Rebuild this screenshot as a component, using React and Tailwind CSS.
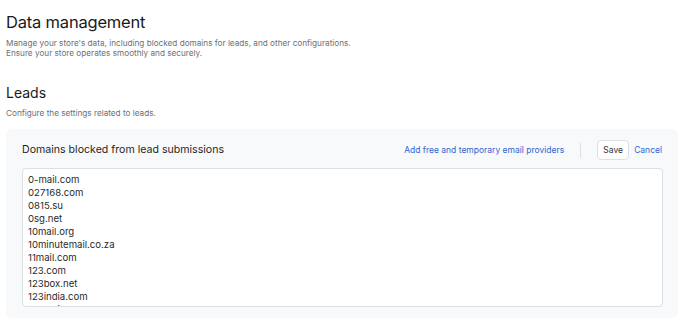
import React from "react";

const domains = [
  "0-mail.com",
  "027168.com",
  "0815.su",
  "0sg.net",
  "10mail.org",
  "10minutemail.co.za",
  "11mail.com",
  "123.com",
  "123box.net",
  "123india.com",
  "123mail.cl",
  "123mail.org",
];

export default function App() {
  return (
    <div className="w-[688px] h-[329px] bg-white overflow-hidden font-['Inter',sans-serif] text-[#1a1a1a]">
      <div className="px-[6px] pt-[11px]">
        <h1 className="text-[16.5px] leading-[22px] font-normal tracking-[-0.2px]">Data management</h1>
        <p className="mt-[5px] text-[8.2px] leading-[10px] text-[#6b6f76]">
          Manage your store's data, including blocked domains for leads, and other configurations.
          <br />
          Ensure your store operates smoothly and securely.
        </p>
        <h2 className="mt-[26px] text-[14px] leading-[18px] font-normal">Leads</h2>
        <p className="mt-[6px] text-[8.2px] leading-[10px] text-[#6b6f76]">Configure the settings related to leads.</p>
        <div className="mt-[11px] w-[672px] h-[189px] rounded-[6px] bg-[#f8f9fa] px-[16px] pt-[11px]">
          <div className="flex items-center h-[20px]">
            <div className="text-[10.6px] leading-[14px] text-[#1f1f1f]">Domains blocked from lead submissions</div>
            <div className="ml-auto flex items-center">
              <button className="text-[8.5px] text-[#2f66d0]">Add free and temporary email providers</button>
              <div className="ml-[16px] w-px h-[15px] bg-[#dcdfe3]" />
              <button className="ml-[16px] h-[20px] w-[32px] rounded-[4px] border border-[#dcdfe3] bg-white text-[8.5px] text-[#333]">Save</button>
              <button className="ml-[5px] text-[8.5px] text-[#2f66d0]">Cancel</button>
            </div>
          </div>
          <textarea
            readOnly
            value={domains.join("\n")}
            className="mt-[8px] block w-[641px] h-[139px] resize-none overflow-hidden rounded-[4px] border border-[#dcdfe3] bg-white px-[5px] pt-[4px] text-[9.6px] leading-[13px] text-[#2a2a2a] outline-none font-['Inter',sans-serif]"
          />
        </div>
      </div>
    </div>
  );
}
